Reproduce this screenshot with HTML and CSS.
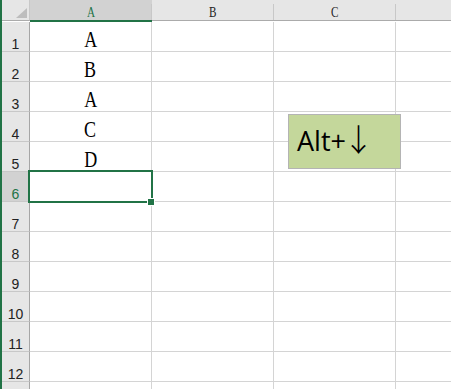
FILE: index.html
```html
<!DOCTYPE html>
<html lang="zh-CN">
<head>
    <meta charset="UTF-8">
    <title>Sheet1</title>
    <link rel="stylesheet" href="styles.css">
</head>
<body>
    <div class="window">
        <div class="edge"></div>
        <div class="sheet">
            <div class="corner">
                <svg class="corner-mark" width="11" height="10" viewBox="0 0 11 10"><polygon points="11,0 11,10 0,10" fill="#bdbdbd"/></svg>
            </div>
            <div class="col-head is-active"><span class="glyph">A</span></div>
            <div class="col-head"><span class="glyph">B</span></div>
            <div class="col-head"><span class="glyph">C</span></div>
            <div class="col-head col-last"></div>

            <div class="row-head">1</div>
            <div class="cell"><span class="value">A</span></div>
            <div class="cell"></div>
            <div class="cell"></div>
            <div class="cell col-last"></div>

            <div class="row-head">2</div>
            <div class="cell"><span class="value">B</span></div>
            <div class="cell"></div>
            <div class="cell"></div>
            <div class="cell col-last"></div>

            <div class="row-head">3</div>
            <div class="cell"><span class="value">A</span></div>
            <div class="cell"></div>
            <div class="cell"></div>
            <div class="cell col-last"></div>

            <div class="row-head">4</div>
            <div class="cell"><span class="value">C</span></div>
            <div class="cell"></div>
            <div class="cell"></div>
            <div class="cell col-last"></div>

            <div class="row-head">5</div>
            <div class="cell"><span class="value">D</span></div>
            <div class="cell"></div>
            <div class="cell"></div>
            <div class="cell col-last"></div>

            <div class="row-head is-active">6</div>
            <div class="cell"></div>
            <div class="cell"></div>
            <div class="cell"></div>
            <div class="cell col-last"></div>

            <div class="row-head">7</div>
            <div class="cell"></div>
            <div class="cell"></div>
            <div class="cell"></div>
            <div class="cell col-last"></div>

            <div class="row-head">8</div>
            <div class="cell"></div>
            <div class="cell"></div>
            <div class="cell"></div>
            <div class="cell col-last"></div>

            <div class="row-head">9</div>
            <div class="cell"></div>
            <div class="cell"></div>
            <div class="cell"></div>
            <div class="cell col-last"></div>

            <div class="row-head">10</div>
            <div class="cell"></div>
            <div class="cell"></div>
            <div class="cell"></div>
            <div class="cell col-last"></div>

            <div class="row-head">11</div>
            <div class="cell"></div>
            <div class="cell"></div>
            <div class="cell"></div>
            <div class="cell col-last"></div>

            <div class="row-head">12</div>
            <div class="cell"></div>
            <div class="cell"></div>
            <div class="cell"></div>
            <div class="cell col-last"></div>

            <!-- 第 13 行只露出上沿 -->
            <div class="row-head"></div>
            <div class="cell"></div>
            <div class="cell"></div>
            <div class="cell"></div>
            <div class="cell col-last"></div>

            <!-- 选中单元格 A6 -->
            <div class="selection"><span class="handle"></span></div>

            <!-- 文本框 -->
            <div class="note">Alt+<span class="arrow">↓</span></div>
        </div>
    </div>
</body>
</html>
```

FILE: styles.css
```css
html, body {
    margin: 0;
    padding: 0;
    background: #ffffff;
}

body {
    width: 451px;
    height: 389px;
    overflow: hidden;
}

.window {
    display: flex;
    height: 389px;
    overflow: hidden;
}

.edge {
    width: 2px;
    flex-shrink: 0;
    background: #217346;
}

.sheet {
    position: relative;
    flex: 1;
    display: grid;
    grid-template-columns: 28px 122px 122px 122px 1fr;
    grid-template-rows: 22px;
    grid-auto-rows: 30px;
}

.sheet > div {
    box-sizing: border-box;
}

/* 表头 */
.corner {
    height: 21px;
    background: #e6e6e6;
    border-right: 1px solid #c8c8c8;
    border-bottom: 1px solid #ababab;
    display: flex;
    justify-content: flex-end;
    align-items: flex-end;
    padding: 0 2px 2px 0;
}

.corner-mark {
    display: block;
}

.col-head {
    height: 21px;
    background: linear-gradient(#c8c8c8, #c8c8c8) right 4px / 1px 17px no-repeat, #e6e6e6;
    border-bottom: 1px solid #ababab;
    text-align: center;
    padding-top: 6px;
    font-family: "Liberation Serif", serif;
    font-size: 14px;
    line-height: 14px;
    color: #222222;
}

.col-head.is-active {
    height: 22px;
    background: linear-gradient(#c8c8c8, #c8c8c8) right 4px / 1px 16px no-repeat, #d2d2d2;
    border-bottom: 2px solid #217346;
    color: #217346;
}

.col-head.col-last {
    background: #e6e6e6;
}

.glyph {
    display: inline-block;
    transform: scaleX(0.8);
}

.row-head {
    background: #e6e6e6;
    border-right: 1px solid #a6a6a6;
    border-bottom: 1px solid #c8c8c8;
    text-align: center;
    padding-top: 15px;
    font-family: "Liberation Sans", Arial, sans-serif;
    font-size: 14px;
    line-height: 14px;
    color: #222222;
}

.row-head.is-active {
    background: #d2d2d2;
    color: #217346;
}

/* 单元格 */
.cell {
    border-right: 1px solid #d4d4d4;
    border-bottom: 1px solid #d4d4d4;
    text-align: center;
    padding-top: 5px;
    font-family: "Liberation Serif", serif;
    font-size: 24px;
    line-height: 24px;
    color: #000000;
    overflow: hidden;
}

.cell.col-last {
    border-right: none;
}

.value {
    display: inline-block;
    transform: scaleX(0.75);
}

.selection {
    position: absolute;
    left: 26px;
    top: 170px;
    width: 125px;
    height: 33px;
    border: 2px solid #217346;
}

.handle {
    position: absolute;
    left: 117px;
    top: 26px;
    width: 8px;
    height: 8px;
    box-sizing: border-box;
    background: #217346;
    border: 1px solid #ffffff;
}

.note {
    position: absolute;
    left: 286px;
    top: 114px;
    width: 113px;
    height: 55px;
    border: 1px solid #b4b4b4;
    background: #c4d79b;
    padding: 5px 0 0 8px;
    font-family: "Open Sans", sans-serif;
    font-size: 27px;
    line-height: 36px;
    color: #000000;
    white-space: nowrap;
}

.arrow {
    margin-left: -3px;
    font-family: "Noto Sans CJK SC", sans-serif;
    font-size: 31px;
    font-weight: 300;
}
```
